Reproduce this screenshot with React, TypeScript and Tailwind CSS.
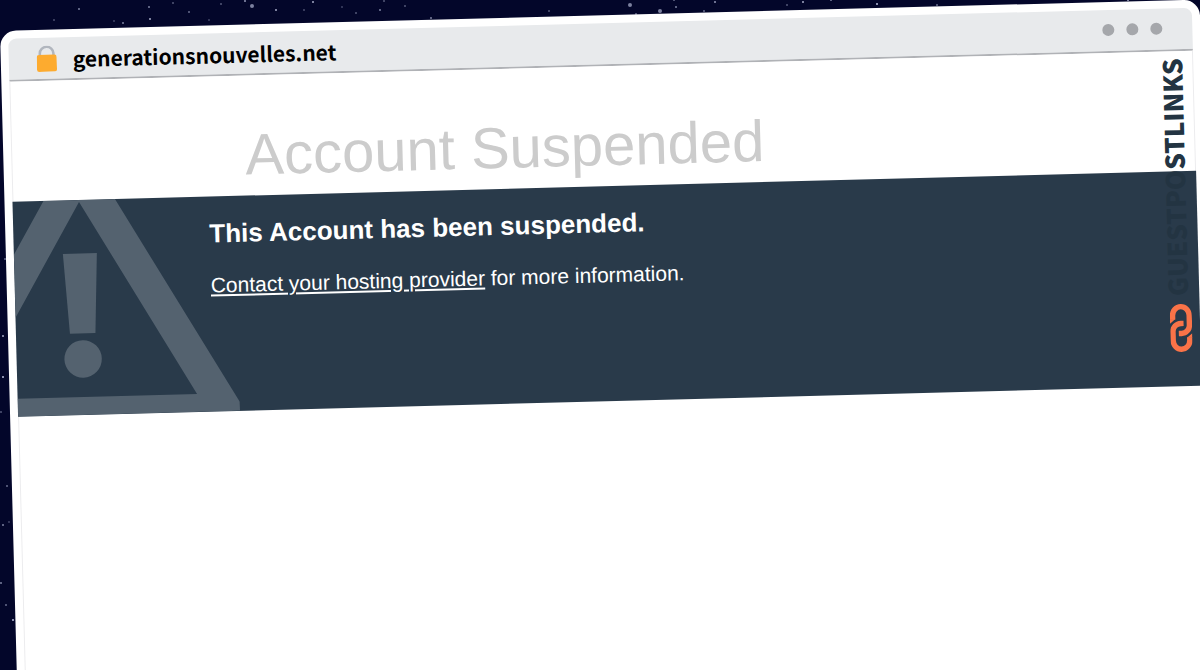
import clsx from "clsx";

// [x, y, radius, opacity]
const STARS = [
  [79, 9, 1, 0.6], [54, 20, 1, 0.35], [114, 21, 1, 0.3], [123, 23, 1, 0.6], [149, 7, 1, 0.6],
  [150, 19, 1, 0.8], [173, 3, 1, 0.4], [189, 12, 1, 0.5], [209, 20, 1, 0.3], [221, 4, 1, 0.4],
  [252, 6, 2, 0.6], [245, 1, 1, 0.7], [276, 10, 1, 0.8], [304, 10, 1, 0.35], [313, 2, 1, 0.8],
  [342, 7, 1, 0.3], [356, 13, 1, 0.4], [380, 10, 1, 0.6], [384, 1, 1, 0.4], [405, 6, 1, 0.4],
  [431, 18, 1, 0.6], [549, 11, 1, 0.4], [630, 5, 2, 0.6], [660, 11, 2, 0.6], [636, 14, 1, 0.5],
  [676, 7, 1, 0.6], [674, 0, 1, 0.5], [715, 2, 1, 0.7], [704, 11, 1, 0.5], [787, 5, 1, 0.4],
  [803, 2, 1, 0.8], [831, 0, 1, 0.6], [877, 4, 1, 0.9], [937, 5, 1, 0.5], [1128, 0, 1, 0.8],
  [5, 259, 1, 0.5], [3, 336, 1, 0.8], [3, 377, 1, 0.9], [1, 412, 1, 0.4], [7, 486, 1, 0.5],
  [3, 525, 1, 0.6], [9, 522, 1, 0.3], [1, 583, 1, 0.6], [6, 605, 1, 0.5], [13, 620, 1, 0.9],
];

function NightSky() {
  return (
    <svg className="absolute inset-0 h-full w-full" aria-hidden="true">
      {STARS.map(([x, y, r, o]) => (
        <circle key={`${x}-${y}`} cx={x} cy={y} r={r} fill="#cdd3ee" opacity={o} />
      ))}
    </svg>
  );
}

function LockIcon() {
  return (
    <svg viewBox="0 0 20 26" className="h-[26px] w-5 shrink-0" aria-hidden="true">
      <path d="M3.2 12V7.6a6.8 6.6 0 0 1 13.6 0V12" fill="none" stroke="#b1b6be" strokeWidth="2.6" />
      <rect y="9" width="20" height="17" rx="2.4" fill="#fdab2f" />
    </svg>
  );
}

function WarningIcon({ className }: { className?: string }) {
  return (
    <svg viewBox="0 0 222 215" className={clsx("h-[215px] w-[222px]", className)} fill="#54626f" aria-hidden="true">
      <path d="M31 0H102.5L222 206V215H0V197H179.5L66.5 2L0 116V53Z" />
      <path d="M49 53.5H83L79.5 133.5H54Z" />
      <circle cx="66.5" cy="159" r="18.7" />
    </svg>
  );
}

function ChainIcon() {
  return (
    <svg viewBox="0 0 22 48" className="h-12 w-[22px] shrink-0" aria-hidden="true">
      <g fill="none" stroke="#fa7348" strokeWidth="5.4">
        <path d="M2.7 14.5V11.5A8.3 8.8 0 0 1 19.3 11.5V20.5A8 8 0 0 1 11.3 28.5H8.5" />
        <path d="M13.5 18.5H10.7A8 8 0 0 0 2.7 26.5V36.5A8.3 8.8 0 0 0 19.3 36.5V32.5" />
      </g>
      <path d="M0 14H5.4L0 18.5ZM22 33H16.6L22 28.5Z" fill="#fa7348" />
    </svg>
  );
}

function AddressBar() {
  return (
    <header className="flex h-[43px] items-center rounded-t-lg border-b-2 border-[#b0b2b6] bg-[#e8eaec] pr-[30px] pl-7">
      <LockIcon />
      <span className="ml-4 font-['Noto_Sans_CJK_SC',sans-serif] text-[21px] leading-8 font-bold text-black">
        generationsnouvelles.net
      </span>
      <div className="ml-auto flex gap-3 pb-0.5">
        <span className="size-3 rounded-full bg-[#a5a7ab]" />
        <span className="size-3 rounded-full bg-[#a5a7ab]" />
        <span className="size-3 rounded-full bg-[#a5a7ab]" />
      </div>
    </header>
  );
}

function Watermark() {
  return (
    <div className="absolute top-[58px] right-3 flex rotate-180 items-center gap-2 [writing-mode:vertical-rl]">
      <ChainIcon />
      <span className="pl-1.5 font-['Noto_Sans_CJK_SC',sans-serif] text-[26px] leading-6 font-black text-[#233442]">
        GUESTPOSTLINKS
      </span>
    </div>
  );
}

export default function App() {
  return (
    <div className="relative h-screen overflow-hidden bg-[#03062a]">
      <NightSky />

      {/* Browser window */}
      <div className="relative mt-[31px] min-h-screen w-full origin-top-left -rotate-[1.5deg] rounded-t-2xl bg-white p-2 font-['Liberation_Sans',Arial,sans-serif]">
        <AddressBar />

        <main className="min-h-screen border-x border-[#ececee]">
          <h1 className="pt-[45px] pb-[7px] pl-[233px] text-[58px] leading-[68px] text-[#cccccc]">
            Account Suspended
          </h1>

          {/* Notice */}
          <section className="relative -mx-px h-[215px] overflow-hidden bg-[#293a4a] pt-[21px] pl-[196px] text-white">
            <WarningIcon className="absolute top-0 left-0" />
            <div className="relative">
              <h2 className="text-[26px] leading-8 font-bold">This Account has been suspended.</h2>
              <p className="mt-[22px] text-[21px] leading-7">
                <a href="#" className="underline">Contact your hosting provider</a> for more information.
              </p>
            </div>
          </section>
        </main>

        <Watermark />
      </div>
    </div>
  );
}
